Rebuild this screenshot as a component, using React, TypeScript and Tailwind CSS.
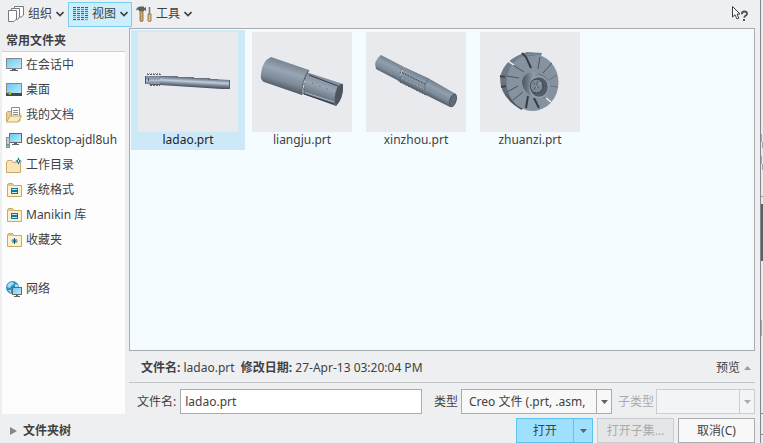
import { useState } from 'react';
import type { ReactNode } from 'react';

/* ---------- small icons ---------- */

function Chevron() {
  return (
    <svg width="8" height="6" viewBox="0 0 8 6" fill="none" stroke="#404245" strokeWidth="1.7">
      <path d="M0.5 1 L4 4.5 L7.5 1" />
    </svg>
  );
}

function Triangle({ className }: { className?: string }) {
  return (
    <svg width="7" height="4" viewBox="0 0 7 4" className={className} fill="currentColor">
      <path d="M0 0 H7 L3.5 4 Z" />
    </svg>
  );
}

function OrganizeIcon() {
  return (
    <svg width="16" height="16" viewBox="0 0 16 16" fill="#fff" stroke="#77797c">
      <path d="M6.5 0.5 H15.5 V9 L13.5 11 H6.5 Z" />
      <path d="M3.5 2.5 H11.5 V11 L9.5 13.5 H3.5 Z" />
      <path d="M0.5 4.5 H8.5 V13 L6 15.5 H0.5 Z" />
    </svg>
  );
}

function ViewIcon() {
  const columns = [
    ['#3c5a6c', '#d13b2f', '#1f87ad', '#3c6a56', '#1f87ad', '#d79a22', '#3c5a6c'],
    ['#3c5a6c', '#1f87ad', '#e0852e', '#3c5a6c', '#2fa6a0', '#1f87ad', '#d13b2f'],
    ['#3c5a6c', '#2fa6a0', '#1f87ad', '#3c5a6c', '#d79a22', '#3c5a6c', '#1f87ad'],
    ['#3c5a6c', '#d13b2f', '#1f87ad', '#2fa6a0', '#3c5a6c', '#1f87ad', '#d79a22'],
  ];
  return (
    <svg width="15" height="14" viewBox="0 0 15 14" shapeRendering="crispEdges">
      {columns.map((col, c) => (
        <g key={c}>
          <rect x={c * 4} y="0" width="3" height="14" fill="#b9e0f0" />
          {col.map((fill, r) => (
            <rect key={r} x={c * 4} y={r * 2} width="3" height="1" fill={fill} />
          ))}
        </g>
      ))}
    </svg>
  );
}

function ToolsIcon() {
  return (
    <svg width="16" height="16" viewBox="0 0 16 16">
      <path d="M0 4.5 Q0.5 1 4 0.5 H8 V2 L10 1 V5 L8 4 V5 H3 L2 3.5 Z" fill="#5d6063" />
      <path d="M4 5 H7 V15 Q5.5 16 4 15 Z" fill="#c9a977" stroke="#8a6234" strokeWidth="0.8" />
      <path d="M13.5 1 V8" stroke="#77797c" strokeWidth="1.6" />
      <path d="M12 8 H15 V15 Q13.5 16 12 15 Z" fill="#e0c08a" stroke="#8a6234" strokeWidth="0.8" />
    </svg>
  );
}

function HelpCursorIcon() {
  return (
    <svg width="17" height="17" viewBox="0 0 17 17">
      <path d="M0.5 0.5 V11 L3 8.8 L5 13 L6.8 12.2 L5 8 H8 Z" fill="#fff" stroke="#3d3f42" />
      <path d="M9.8 8.2 Q9.8 5.5 12.3 5.5 Q15 5.5 15 7.8 Q15 9.3 13.2 10 Q12.3 10.5 12.3 11.8" fill="none" stroke="#4d4f52" strokeWidth="1.8" />
      <rect x="11" y="13" width="2" height="2" fill="#4d4f52" />
    </svg>
  );
}

function ScreenGradient({ id }: { id: string }) {
  return (
    <linearGradient id={id} x1="0" y1="0" x2="1" y2="1">
      <stop offset="0" stopColor="#65c8f0" />
      <stop offset="1" stopColor="#c4eefc" />
    </linearGradient>
  );
}

function MonitorIcon() {
  return (
    <svg width="16" height="16" viewBox="0 0 16 16">
      <defs><ScreenGradient id="scr1" /></defs>
      <rect x="0.5" y="1.5" width="15" height="10" fill="url(#scr1)" stroke="#85888b" />
      <path d="M6 12 H10 V13 H12 V14 H4 V13 H6 Z" fill="#606366" />
    </svg>
  );
}

function DesktopIcon() {
  return (
    <svg width="16" height="16" viewBox="0 0 16 16">
      <defs><ScreenGradient id="scr2" /></defs>
      <rect x="0.5" y="1.5" width="15" height="12" fill="url(#scr2)" stroke="#85888b" />
      <rect x="0" y="11" width="16" height="3" fill="#46494c" />
      <rect x="2" y="10" width="2" height="2" fill="#4da3d9" />
      <rect x="4" y="10" width="1" height="2" fill="#e8c22e" />
      <rect x="3" y="12" width="2" height="1" fill="#6fbf3d" />
    </svg>
  );
}

function DocumentsIcon() {
  return (
    <svg width="16" height="16" viewBox="0 0 16 16">
      <path d="M0.5 14 V6 L1.5 4.5 H5 L6 6 H14 V14 Z" fill="#e9cf9b" stroke="#c9a769" />
      <path d="M5.5 0.5 H13.5 V11 H5.5 Z" fill="#fff" stroke="#8a8d90" />
      <path d="M7 3.5 H12 M7 5.5 H12 M7 7.5 H12" stroke="#8a8d90" />
      <path d="M0.5 15 L4 9 H15.5 L12 15 Z" fill="#fae9bf" stroke="#c9a769" />
    </svg>
  );
}

function ComputerIcon() {
  return (
    <svg width="16" height="16" viewBox="0 0 16 16">
      <defs><ScreenGradient id="scr3" /></defs>
      <rect x="3.5" y="1.5" width="12" height="9" fill="url(#scr3)" stroke="#65686b" />
      <path d="M8 11 H11 V12 H13 V13 H6 V12 H8 Z" fill="#606366" />
      <rect x="0.5" y="5.5" width="3" height="10" fill="#c9cccf" stroke="#898c8f" />
      <rect x="1" y="12" width="2" height="2" fill="#54b948" />
    </svg>
  );
}

function FolderIcon({ children }: { children?: ReactNode }) {
  return (
    <svg width="16" height="16" viewBox="0 0 16 16">
      <path d="M1.5 14.5 V3 L2.5 1.5 H6.5 L8 3.5 H15.5 V14.5 Z" fill="#e3c58c" stroke="#caa86b" />
      <rect x="2" y="4" width="13" height="10" fill="#fdf0cf" />
      {children}
    </svg>
  );
}

function WorkingDirIcon() {
  return (
    <svg width="16" height="16" viewBox="0 0 16 16">
      <path d="M0.5 15.5 V5 L1.5 3.5 H6 L7 5.5 H14.5 V15.5 Z" fill="#fae5b8" stroke="#caa86b" />
      <path d="M12.5 0 L13.5 3 L16 4 L13.5 5 L12.5 8 L11.5 5 L9 4 L11.5 3 Z" fill="#11729b" />
      <rect x="12" y="3" width="1" height="2" fill="#dff5ff" />
    </svg>
  );
}

function LibraryIcon() {
  return (
    <FolderIcon>
      <path d="M5 6 H12 V12 H5 Z" fill="#12759c" />
      <path d="M6 7.5 H11 M6 10.5 H11" stroke="#c5ebf7" />
    </FolderIcon>
  );
}

function FavoritesIcon() {
  return (
    <FolderIcon>
      <path d="M8.5 6 V12 M5.5 9 H11.5 M6.5 7 L10.5 11 M10.5 7 L6.5 11" stroke="#12607f" />
    </FolderIcon>
  );
}

function NetworkIcon() {
  return (
    <svg width="16" height="16" viewBox="0 0 16 16">
      <defs><ScreenGradient id="scr4" /></defs>
      <circle cx="6.5" cy="6.5" r="6.5" fill="#2693c4" />
      <path d="M2 3 Q4 0.5 7 1 L8 3 L5 5 L4 7 L1 6 Z M9 3 L12 4 L12 6 L9 6 Z M2 9 L5 9 L5 12 Z" fill="#a5dcf3" />
      <rect x="6.5" y="6.5" width="9" height="7" fill="url(#scr4)" stroke="#65686b" />
      <path d="M10 14 H12 V15 H14 V16 H8 V15 H10 Z" fill="#606366" />
    </svg>
  );
}

/* ---------- part thumbnails ---------- */

function BroachThumb() {
  return (
    <svg width="100" height="100" viewBox="0 0 100 100" className="block bg-[#e8eaee]">
      <defs>
        <linearGradient id="broach" gradientUnits="userSpaceOnUse" x1="50" y1="45.5" x2="49.5" y2="55">
          <stop offset="0" stopColor="#66717e" />
          <stop offset="0.2" stopColor="#8c9aab" />
          <stop offset="0.4" stopColor="#c3cddb" />
          <stop offset="0.65" stopColor="#8190a1" />
          <stop offset="1" stopColor="#454d59" />
        </linearGradient>
      </defs>
      <path d="M7 44 H22 L92 48 V57 H84 L22 53 H13 L7 51 Z" fill="url(#broach)" />
      <path d="M22 44 H40 V45 H22 Z M38 45 H56 V46 H38 Z M54 46 H72 V47 H54 Z M70 47 H80 V48 H70 Z" fill="#68727f" />
      <path d="M7 45 H22 V52 H13 L7 51 Z" fill="#8997a8" />
      <path d="M8 48.5 H22" stroke="#b6c1cf" strokeWidth="2" />
      <path d="M9 42.5 H23 M12 53.5 H22" stroke="#5b6370" strokeDasharray="2 1" />
      <path d="M9 41.5 H23" stroke="#8b98a9" strokeDasharray="1 1" />
      <path d="M7.5 44 V52 M10.5 46 V49" stroke="#4d5561" />
      <path d="M91.5 48 V57" stroke="#565f6b" />
    </svg>
  );
}

function MandrelThumb() {
  return (
    <svg width="100" height="100" viewBox="0 0 100 100" className="block bg-[#e8eaee]">
      <defs>
        <linearGradient id="mandrel" gradientUnits="userSpaceOnUse" x1="36" y1="30" x2="28" y2="57">
          <stop offset="0" stopColor="#77828f" />
          <stop offset="0.35" stopColor="#98a5b4" />
          <stop offset="0.7" stopColor="#7e8a98" />
          <stop offset="1" stopColor="#4d5661" />
        </linearGradient>
        <linearGradient id="mandrel-tip" gradientUnits="userSpaceOnUse" x1="73" y1="45" x2="65" y2="69">
          <stop offset="0" stopColor="#7d8996" />
          <stop offset="0.4" stopColor="#98a5b4" />
          <stop offset="1" stopColor="#56606c" />
        </linearGradient>
      </defs>
      <path d="M54 40 L91 52 Q92 65 84 74 L51 62 Z" fill="url(#mandrel-tip)" />
      <path d="M19 25 L57 38 Q49 49 50 63 L12 50 Q8 48 9 42 Q10 29 19 25 Z" fill="url(#mandrel)" />
      <path d="M57 38 Q49 49 50 63" fill="none" stroke="#505965" />
      <path d="M55 41 Q51 50 52 61" fill="none" stroke="#59626d" strokeDasharray="3 2" />
      <path d="M57 43 L86 54 M52 62 L82 72" stroke="#333a44" />
      <path d="M53 60.5 L82 70" stroke="#aab7c4" />
      <path d="M60 51 L78 58" stroke="#5c6672" strokeDasharray="1 7" />
      <path d="M91 52 Q92 66 84 74 Q81 66 85 56 Q87 52 91 52 Z" fill="#4b545f" />
    </svg>
  );
}

function ShaftThumb() {
  return (
    <svg width="100" height="100" viewBox="0 0 100 100" className="block bg-[#e8eaee]">
      <defs>
        <linearGradient id="shaft" gradientUnits="userSpaceOnUse" x1="53" y1="41" x2="45" y2="57">
          <stop offset="0" stopColor="#707b88" />
          <stop offset="0.35" stopColor="#91a0ae" />
          <stop offset="0.7" stopColor="#7b8795" />
          <stop offset="1" stopColor="#454e59" />
        </linearGradient>
      </defs>
      <path d="M38 35 L62 46 L90 62 Q90 70 84 75 L58 62 L32 49 Z" fill="url(#shaft)" />
      <path d="M15 23 L38 35 Q33 41 33 49 L10 37 Q7 29 15 23 Z" fill="url(#shaft)" />
      <path d="M37 36 Q33 41 34 49" fill="none" stroke="#5b6570" strokeDasharray="3 1" />
      <path d="M36 40.5 L60 52.5" stroke="#333b45" strokeDasharray="2 1" />
      <path d="M36 46 L58 57" stroke="#a1aebb" strokeDasharray="2 2" />
      <path d="M34 50 L60 63" stroke="#454e59" strokeDasharray="2 1" />
      <path d="M62 47 Q58 53 58 61" fill="none" stroke="#6b7682" />
      <ellipse cx="87" cy="68.5" rx="3" ry="6.5" transform="rotate(20 87 68.5)" fill="#606c79" stroke="#4a535f" />
    </svg>
  );
}

function RotorThumb() {
  return (
    <svg width="100" height="100" viewBox="0 0 100 100" className="block bg-[#e8eaee]">
      <defs>
        <linearGradient id="hub" x1="0" y1="0" x2="1" y2="0">
          <stop offset="0" stopColor="#4b5460" />
          <stop offset="0.45" stopColor="#8e9ba9" />
          <stop offset="1" stopColor="#5c6570" />
        </linearGradient>
        <linearGradient id="rim" x1="0" y1="0" x2="0" y2="1">
          <stop offset="0" stopColor="#74808d" />
          <stop offset="0.6" stopColor="#687380" />
          <stop offset="1" stopColor="#3d4550" />
        </linearGradient>
      </defs>
      <path d="M47 20 L62 21 L42 78 Q20 66 20 46 Q23 27 47 20 Z" fill="url(#rim)" />
      <ellipse cx="52.5" cy="50.5" rx="26" ry="28.5" fill="#86929f" />
      <path d="M33 33 L44 40 M63 41 L72 31 M27 44 L39 46 M27 60 L38 54 M33 68 L43 60 M58 37 L60 25" fill="none" stroke="#4b545f" />
      <path d="M42 21 L46 25 L51 36 M46 76 L48 64 M59 76 L54 66" fill="none" stroke="#353d47" strokeWidth="2" />
      <path d="M69 48 L77 43 M70 54 L78 55 M63 65 L68 68 M46 24 L55 23" stroke="#6b7682" />
      <path d="M20 44 L25 45 M21 55 L26 54" stroke="#3c444e" strokeWidth="2" />
      <path d="M28 29 L34 33 M66 66 L71 70" stroke="#f1f3f6" strokeWidth="1.5" />
      <path d="M42 50 Q43 40 55 40 Q63 41 68 48 L67 61 Q61 69 54 65 Q43 61 42 50 Z" fill="url(#hub)" />
      <ellipse cx="59" cy="55" rx="9.5" ry="10.5" fill="#525c68" stroke="#93a0ad" strokeWidth="1.5" />
      <ellipse cx="56.5" cy="54" rx="6.5" ry="7" fill="#7c8896" stroke="#3d4651" />
      <path d="M53 51 L59 56 M58 49 L54 58" stroke="#596470" />
      <path d="M55 53 L57 55 M60 50 V53" stroke="#a6b3bf" />
    </svg>
  );
}

/* ---------- dialog ---------- */

const folders = [
  { name: '在会话中', icon: <MonitorIcon /> },
  { name: '桌面', icon: <DesktopIcon /> },
  { name: '我的文档', icon: <DocumentsIcon /> },
  { name: 'desktop-ajdl8uh', icon: <ComputerIcon /> },
  { name: '工作目录', icon: <WorkingDirIcon /> },
  { name: '系统格式', icon: <LibraryIcon /> },
  { name: 'Manikin 库', icon: <LibraryIcon /> },
  { name: '收藏夹', icon: <FavoritesIcon /> },
];

const files = [
  { name: 'ladao.prt', thumb: <BroachThumb /> },
  { name: 'liangju.prt', thumb: <MandrelThumb /> },
  { name: 'xinzhou.prt', thumb: <ShaftThumb /> },
  { name: 'zhuanzi.prt', thumb: <RotorThumb /> },
];

function FolderButton({ name, icon }: { name: string; icon: ReactNode }) {
  return (
    <button className="flex h-[25px] w-full items-center gap-1 pl-1 text-left whitespace-nowrap hover:bg-[#e5f5fc]">
      <span className="shrink-0">{icon}</span>
      <span>{name}</span>
    </button>
  );
}

export default function App() {
  const [fileName, setFileName] = useState('ladao.prt');

  return (
    <div className="flex h-screen min-h-[400px] overflow-hidden bg-[#eeeff1] font-['Noto_Sans','Noto_Sans_CJK_SC',sans-serif] text-xs text-[#3f4144]">
      <div className="flex min-w-0 flex-1 flex-col">
        {/* Toolbar */}
        <header className="flex h-7 shrink-0 items-center pl-1">
          <button className="flex h-[25px] items-center gap-1 px-1">
            <OrganizeIcon />
            <span>组织</span>
            <Chevron />
          </button>
          <button className="flex h-[25px] items-center gap-1 border border-[#7acdf2] bg-[#cdeefd] pr-[3px] pl-1">
            <ViewIcon />
            <span>视图</span>
            <Chevron />
          </button>
          <button className="flex h-[25px] items-center gap-1 px-1">
            <ToolsIcon />
            <span>工具</span>
            <Chevron />
          </button>
          <button aria-label="Help" className="mr-[11px] ml-auto">
            <HelpCursorIcon />
          </button>
        </header>

        <div className="flex min-h-0 flex-1 pr-[5px]">
          {/* Common folders */}
          <aside className="mr-1 ml-0.5 flex w-[123px] shrink-0 flex-col">
            <h2 className="flex h-6 items-center border-b border-[#cfd1d4] pt-0.5 pl-1 font-bold">常用文件夹</h2>
            <nav className="flex-1 overflow-hidden bg-[#fdfdfd]">
              {folders.map((f) => (
                <FolderButton key={f.name} name={f.name} icon={f.icon} />
              ))}
              <div className="mt-6">
                <FolderButton name="网络" icon={<NetworkIcon />} />
              </div>
            </nav>
          </aside>

          <main className="flex min-w-0 flex-1 flex-col">
            <section className="flex flex-1 content-start items-start overflow-hidden border border-[#a9abae] bg-[#f4fcff] p-px">
              {files.map((f, i) => (
                <button
                  key={f.name}
                  onClick={() => setFileName(f.name)}
                  className={`flex h-[120px] w-[114px] shrink-0 flex-col items-center pt-0.5 ${i === 0 ? 'bg-[#cde9f7] text-[#222426]' : ''}`}
                >
                  {f.thumb}
                  <span className="leading-4">{f.name}</span>
                </button>
              ))}
            </section>

            <div className="flex h-8 shrink-0 items-center border-b border-[#c3c5c8] pt-0.5 pl-3">
              <p className="whitespace-nowrap">
                <b>文件名:</b> ladao.prt&nbsp; <b>修改日期:</b> 27-Apr-13 03:20:04 PM
              </p>
              <button className="mr-1 ml-auto flex items-center gap-1">
                预览
                <Triangle className="rotate-180 text-[#9a9c9f]" />
              </button>
            </div>

            <div className="mt-1.5 flex h-[25px] shrink-0 items-center pl-2">
              <label htmlFor="file-name" className="mr-1 whitespace-nowrap">文件名:</label>
              <input
                id="file-name"
                type="text"
                value={fileName}
                onChange={(e) => setFileName(e.target.value)}
                className="h-full min-w-0 flex-1 border border-[#a9abae] bg-white px-1 outline-none"
              />
              <label htmlFor="file-type" className="mr-[3px] ml-3 whitespace-nowrap">类型</label>
              <div className="relative h-full w-[151px]">
                <select
                  id="file-type"
                  className="h-full w-full appearance-none overflow-hidden border border-[#a9abae] bg-[#f8f8f9] pr-5 pl-[7px] outline-none"
                >
                  <option>Creo 文件 (.prt, .asm,</option>
                </select>
                <span className="pointer-events-none absolute inset-y-0 right-0 flex w-4 items-center justify-center border-l border-[#a9abae] text-[#5f6164]">
                  <Triangle />
                </span>
              </div>
              <label htmlFor="sub-type" className="mr-0.5 ml-1.5 whitespace-nowrap text-[#a9abae]">子类型</label>
              <div className="relative h-full w-[99px]">
                <select id="sub-type" disabled className="h-full w-full appearance-none border border-[#cbcdd0] bg-[#f3f4f5]" />
                <span className="pointer-events-none absolute inset-y-0 right-0 flex w-4 items-center justify-center border-l border-[#cbcdd0] text-[#a9abae]">
                  <Triangle />
                </span>
              </div>
            </div>
          </main>
        </div>

        {/* Footer */}
        <footer className="flex h-[29px] shrink-0 items-end justify-between pr-[5px] pl-2.5">
          <button className="flex h-[25px] items-center gap-1.5 font-bold">
            <svg width="7" height="8" viewBox="0 0 7 8" fill="#85878a">
              <path d="M0 0 L7 4 L0 8 Z" />
            </svg>
            文件夹树
          </button>
          <div className="flex h-[25px] gap-1">
            <div className="flex w-[77px] border border-[#5fc3f0] bg-[#a0e0ff]">
              <button className="flex-1">打开</button>
              <button aria-label="More" className="flex w-[19px] items-center justify-center border-l border-[#5fc3f0] text-[#5f6164]">
                <Triangle />
              </button>
            </div>
            <button disabled className="w-[77px] border border-[#cbcdd0] bg-[#e5e6e8] text-[#a9abae]">打开子集...</button>
            <button className="w-[77px] border border-[#a9abae] bg-[#f8f8f9]">取消(C)</button>
          </div>
        </footer>
      </div>

      {/* Edge of the model window behind the dialog */}
      <div className="flex w-[3px] shrink-0 flex-col border-l border-[#85878a] bg-[#e9eaed]">
        <div className="mt-[134px] h-2 w-px bg-[#a5a5b8]" />
        <div className="ml-px h-1.5 w-px bg-[#a5a5b8]" />
        <div className="mt-2 h-2 w-px bg-[#a5a5b8]" />
        <div className="ml-px h-1.5 w-px bg-[#a5a5b8]" />
        <div className="mt-[26px] h-px bg-[#c08f95]" />
        <div className="mt-[7px] h-[57px] bg-[#5a5f68]" />
        <div className="mt-[59px] h-4 w-px bg-[#a5a5b8]" />
        <div className="mt-[77px] h-px bg-[#85878a]" />
        <div className="mt-5 h-px bg-[#85878a]" />
      </div>
    </div>
  );
}
